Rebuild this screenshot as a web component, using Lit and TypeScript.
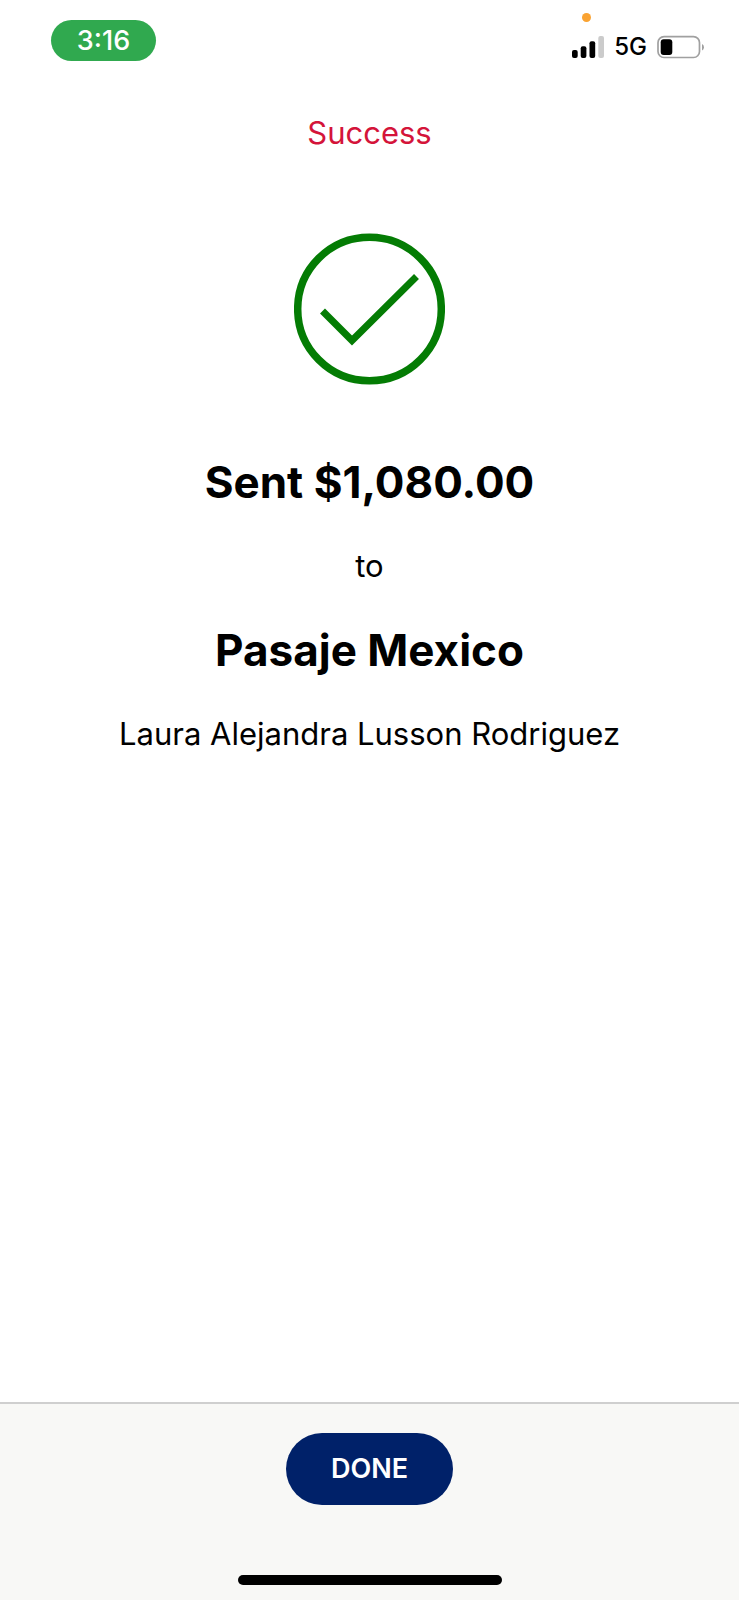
import { LitElement, html, css } from "lit";
import { customElement, property } from "lit/decorators.js";

@customElement("status-bar")
class StatusBar extends LitElement {
  @property() time = "";
  @property() network = "";

  static styles = css`
    :host {
      display: flex;
      justify-content: space-between;
      align-items: flex-start;
      padding: 20px 34px 0 51px;
    }
    .time {
      width: 105px;
      height: 41px;
      line-height: 41px;
      border-radius: 21px;
      background: #30a94f;
      color: #fff;
      font-size: 27px;
      font-weight: 500;
      text-align: center;
    }
    .indicators {
      position: relative;
      display: flex;
      align-items: center;
      height: 24px;
      padding-top: 15px;
      gap: 10px;
      font-size: 24px;
      font-weight: 500;
      line-height: 24px;
    }
    .recording {
      position: absolute;
      top: -7px;
      left: 10px;
      width: 9px;
      height: 9px;
      border-radius: 50%;
      background: #faa332;
    }
    svg {
      display: block;
    }
  `;

  render() {
    return html`
      <div class="time">${this.time}</div>
      <div class="indicators">
        <span class="recording"></span>
        <svg width="32" height="24" viewBox="0 0 32 24" aria-label="Signal strength">
          <rect x="0" y="15" width="5.700" height="8" rx="2" />
          <rect x="8.700" y="11.300" width="5.700" height="11.700" rx="2" />
          <rect x="17.500" y="6.300" width="5.700" height="16.700" rx="2" />
          <rect x="26.300" y="1" width="5.700" height="22" rx="2" fill="#cbcbcb" />
        </svg>
        <span>${this.network}</span>
        <svg width="48" height="24" viewBox="0 0 48 24" aria-label="Battery">
          <rect x="1" y="1.7" width="41.5" height="20.8" rx="6" fill="none" stroke="#a0a0a0" stroke-width="1.7" />
          <rect x="3.7" y="4.3" width="11.6" height="15.6" rx="3" />
          <path d="M45 9 Q47 10 47 12.200 Q47 14.400 45 15.400 Z" fill="#a0a0a0" />
        </svg>
      </div>
    `;
  }
}

@customElement("app-root")
class AppRoot extends LitElement {
  static styles = css`
    :host {
      display: flex;
      flex-direction: column;
      min-height: 100vh;
      background: #fff;
      color: #000;
      font-family: Inter, "Liberation Sans", sans-serif;
    }
    h1,
    h2,
    p {
      margin: 0;
    }
    .title {
      padding-top: 52px;
      color: #d4143a;
      font-size: 31px;
      font-weight: 400;
      line-height: 40px;
      text-align: center;
    }
    .receipt {
      flex: 1;
      display: flex;
      flex-direction: column;
      align-items: center;
      gap: 36px;
      padding: 80px 24px 36px;
      text-align: center;
    }
    .check {
      display: block;
      margin-bottom: 33px;
    }
    .headline {
      font-size: 44px;
      font-weight: 700;
      line-height: 56px;
    }
    .detail {
      font-size: 31px;
      line-height: 40px;
    }
    .actions {
      display: flex;
      flex-direction: column;
      align-items: center;
      gap: 70px;
      padding: 29px 0 15px;
      border-top: 2px solid #cfcfcf;
      background: #f8f8f6;
    }
    .done {
      padding: 20px 45px;
      border: 0;
      border-radius: 36px;
      background: #002169;
      color: #fff;
      font-family: inherit;
      font-size: 27px;
      font-weight: 600;
      line-height: 32px;
    }
    .home {
      width: 264px;
      height: 10px;
      border-radius: 5px;
      background: #000;
    }
  `;

  render() {
    return html`
      <status-bar time="3:16" network="5G"></status-bar>
      <h1 class="title">Success</h1>
      <main class="receipt">
        <svg class="check" width="151" height="152" viewBox="0 0 151 152" fill="none" stroke="#047c04" stroke-width="7.5" aria-hidden="true">
          <circle cx="75.5" cy="76" r="71.8" />
          <path d="M28.500 78 L58 107.500 L122.500 43.500" stroke-width="7" />
        </svg>
        <h2 class="headline">Sent $1,080.00</h2>
        <p class="detail">to</p>
        <h2 class="headline">Pasaje Mexico</h2>
        <p class="detail">Laura Alejandra Lusson Rodriguez</p>
      </main>
      <footer class="actions">
        <button class="done" type="button">DONE</button>
        <div class="home"></div>
      </footer>
    `;
  }
}
